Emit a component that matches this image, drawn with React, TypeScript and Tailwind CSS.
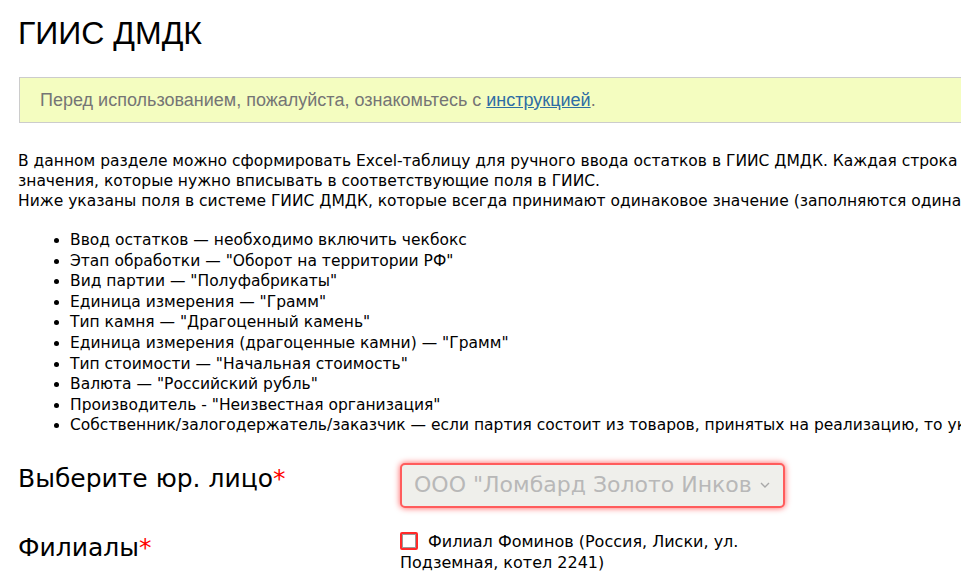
const FIELDS = [
  "Ввод остатков — необходимо включить чекбокс",
  "Этап обработки — \"Оборот на территории РФ\"",
  "Вид партии — \"Полуфабрикаты\"",
  "Единица измерения — \"Грамм\"",
  "Тип камня — \"Драгоценный камень\"",
  "Единица измерения (драгоценные камни) — \"Грамм\"",
  "Тип стоимости — \"Начальная стоимость\"",
  "Валюта — \"Российский рубль\"",
  "Производитель - \"Неизвестная организация\"",
  "Собственник/залогодержатель/заказчик — если партия состоит из товаров, принятых на реализацию, то указывается комитент",
];

export default function App() {
  return (
    <div className="h-[588px] w-[961px] overflow-hidden bg-white">
      <div className="w-[1300px] px-[18px] font-['DejaVu_Sans',sans-serif] text-[15.5px] leading-[20px] text-black">
        <h1 className="pt-[14px] font-['Liberation_Sans',Arial,sans-serif] text-[32px] leading-[38px]">
          ГИИС ДМДК
        </h1>

        <div className="mt-[25px] ml-px border border-[#cccccc] bg-[#f4fdc0] px-[20px] py-[12px] font-['Liberation_Sans',Arial,sans-serif] text-[18px] leading-[20px] text-[#757575]">
          Перед использованием, пожалуйста, ознакомьтесь с{" "}
          <a href="#" className="text-[#2e6da4] underline">
            инструкцией
          </a>
          .
        </div>

        <p className="mt-[28px] whitespace-nowrap">
          В данном разделе можно сформировать Excel-таблицу для ручного ввода остатков в ГИИС ДМДК. Каждая строка таблицы соответствует одной партии.
          <br />
          значения, которые нужно вписывать в соответствующие поля в ГИИС.
          <br />
          Ниже указаны поля в системе ГИИС ДМДК, которые всегда принимают одинаковое значение (заполняются одинаково для всех партий):
        </p>

        <ul className="mt-[19px] list-disc pl-[52px] leading-[20.6px] whitespace-nowrap">
          {FIELDS.map((f) => (
            <li key={f}>{f}</li>
          ))}
        </ul>

        <div className="mt-[27px] grid w-[767px] grid-cols-[382px_385px] gap-y-[21px]">
          <label className="self-start text-[25px] leading-[32px]">
            Выберите юр. лицо<span className="text-[#ff0000]">*</span>
          </label>
          <div className="flex h-[45px] items-center justify-between rounded-[5px] border-2 border-[#ff5c5c] bg-[#efefeb] pl-[12px] pr-[12px] shadow-[0_0_6px_#ff5a5a]">
            <span className="overflow-hidden whitespace-nowrap text-[22px] leading-[30px] text-[#b8b8b8]">
              ООО "Ломбард Золото Инков
            </span>
            <svg width="12" height="8" viewBox="0 0 12 8" className="ml-2 shrink-0">
              <path d="M2 2l4 4 4-4" fill="none" stroke="#a8a8a8" strokeWidth="1.4" />
            </svg>
          </div>

          <label className="pt-[3px] text-[25px] leading-[32px]">
            Филиалы<span className="text-[#ff0000]">*</span>
          </label>
          <div className="text-[16px] leading-[21px]">
            <span className="mr-[10px] inline-block h-[18px] w-[18px] translate-y-[3px] rounded-[2px] border-2 border-[#ff2a2a] bg-white shadow-[inset_0_0_0_1px_#9a9a9a]" />
            Филиал Фоминов (Россия, Лиски, ул. Подземная, котел 2241)
          </div>
        </div>
      </div>
    </div>
  );
}
